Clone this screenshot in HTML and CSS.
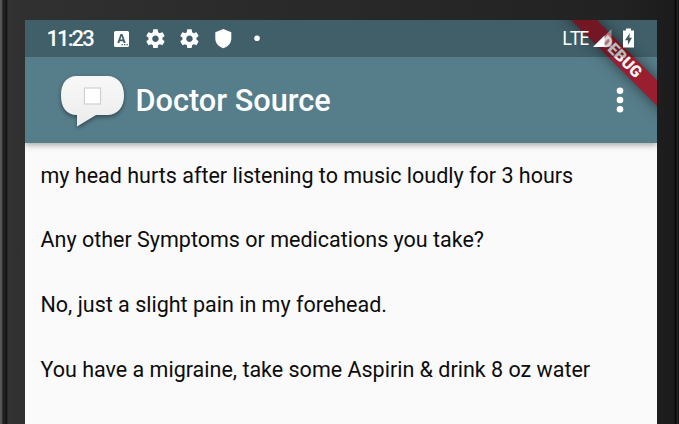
FILE: index.html
```html
<!DOCTYPE html>
<html lang="en">
<head>
<meta charset="utf-8">
<title>Doctor Source</title>
<link rel="stylesheet" href="styles.css">
</head>
<body>
<div class="phone">
  <main class="screen">
    <header class="appbar">
      <svg class="logo" viewBox="0 0 76 64">
        <defs><linearGradient id="bubble" x1="0" y1="0" x2="0" y2="1"><stop offset="0" stop-color="#f8f8f8"/><stop offset="1" stop-color="#ececec"/></linearGradient></defs>
        <path d="M22 6H52C63 6 69 14 69 25.500S63 45 52 45H41L22 56.500V45C11 45 6 37 6 25.500S11 6 22 6Z" fill="url(#bubble)"/>
        <rect x="29.500" y="18" width="16" height="16" fill="#fff" stroke="#d0d0d0" stroke-width="1.200"/>
      </svg>
      <h1 class="title">Doctor Source</h1>
      <svg class="more" viewBox="0 0 8 28"><circle cx="4" cy="4.700" r="3.300"/><circle cx="4" cy="14" r="3.300"/><circle cx="4" cy="23.200" r="3.300"/></svg>
    </header>
    <section class="messages">
      <p>my head hurts after listening to music loudly for 3 hours</p>
      <p>Any other Symptoms or medications you take?</p>
      <p>No, just a slight pain in my forehead.</p>
      <p>You have a migraine, take some Aspirin &amp; drink 8 oz water</p>
    </section>
    <div class="banner">DEBUG</div>
    <div class="status">
      <span class="clock">11:23</span>
      <svg class="notices" viewBox="0 0 160 37">
        <path fill-rule="evenodd" d="M5.500 11H17.500Q19 11 19 12.500V25.500Q19 27 17.500 27H5.500Q4 27 4 25.500V12.500Q4 11 5.500 11ZM10.500 14L7.300 23H9.400L9.900 21.200H13.100L13.600 23H15.700L12.500 14ZM11.500 16L12.600 19.600H10.400Z"/>
        <path class="cut" d="M11.500 24.700h1.300M14 24.700h1.300M16.500 24.700h1.300"/>
        <g id="gear"><path transform="translate(34.300 7.500) scale(.93)" d="M19.430 12.980c.04-.32.07-.64.07-.98s-.03-.66-.07-.98l2.110-1.650c.19-.15.24-.42.12-.64l-2-3.460c-.12-.22-.39-.3-.61-.22l-2.490 1c-.52-.4-1.080-.73-1.690-.98l-.38-2.650C14.460 2.180 14.250 2 14 2h-4c-.25 0-.46.18-.49.42l-.38 2.650c-.61.25-1.170.59-1.690.98l-2.490-1c-.23-.09-.49 0-.61.22l-2 3.460c-.13.22-.07.49.12.64l2.110 1.650c-.04.32-.07.65-.07.98s.03.66.07.98l-2.110 1.650c-.19.15-.24.42-.12.64l2 3.460c.12.22.39.3.61.22l2.490-1c.52.4 1.080.73 1.690.98l.38 2.650c.03.24.24.42.49.42h4c.25 0 .46-.18.49-.42l.38-2.650c.61-.25 1.170-.59 1.690-.98l2.490 1c.23.09.49 0 .61-.22l2-3.460c.12-.22.07-.49-.12-.64l-2.110-1.650zM12 15.500c-1.930 0-3.500-1.570-3.500-3.500s1.570-3.500 3.500-3.500 3.500 1.570 3.500 3.500-1.570 3.500-3.500 3.500z"/></g>
        <use href="#gear" x="34"/>
        <path d="M113.300 9L121.300 12.200V18.500C121.300 23 118 26.700 113.300 28.300C108.600 26.700 105.300 23 105.300 18.500V12.200Z"/>
        <circle cx="147" cy="18.200" r="2.800"/>
      </svg>
      <span class="network">LTE</span>
      <svg class="power" viewBox="0 0 50 37">
        <path opacity=".4" d="M18.500 9V27H0Z"/><path d="M11.500 15.500V27H0Z"/>
        <path fill-rule="evenodd" d="M33 8.500H38V10.500H41V27.500H30V10.500H33ZM36.800 13L32 20.200H34.900V25L39 17.800H36.400Z"/>
      </svg>
    </div>
  </main>
</div>
</body>
</html>
```
FILE: styles.css
```css
* { box-sizing: border-box; }
body { margin: 0; font-family: Roboto, sans-serif; }
.phone {
  height: 424px;
  padding: 20px 22px 0 25px;
  overflow: hidden;
  background:
    linear-gradient(90deg, #595959 0, #505050 2px, #171717 3px, #282828 5px, #080808 6px, #333 8px, transparent 9px) left / 9px 100% no-repeat,
    linear-gradient(90deg, transparent, #060606 2px, #252525 3px, #151515) right / 5px 100% no-repeat,
    linear-gradient(90deg, #343434, #303030 25px, #222 620px, #1b1b1b);
}
.screen { position: relative; height: 404px; overflow: hidden; background: #fafafa; }
.appbar {
  position: relative;
  display: flex;
  align-items: center;
  height: 123px;
  padding: 37px 33px 0 30px;
  background: #567d8a;
  box-shadow: 0 2px 6px rgba(0, 0, 0, .35);
}
.logo { width: 76px; height: 64px; margin-top: 4px; filter: drop-shadow(0 2px 2px rgba(0, 0, 0, .4)); }
.title { flex: 1; margin: 1px 0 0 4.500px; color: #fff; font-size: 30.700px; font-weight: 500; line-height: 36px; }
.more { width: 8px; height: 28px; fill: #fff; }
.messages { display: grid; grid-auto-rows: 64.7px; align-items: center; padding-top: .3px; color: #0c0c0c; }
.messages p { margin: 0; padding-left: 15.500px; font-size: 21.500px; line-height: 26px; white-space: nowrap; }
.banner {
  position: absolute;
  top: 28px;
  left: 525px;
  width: 142px;
  height: 18px;
  transform: rotate(45deg);
  background: rgba(170, 8, 25, .8);
  box-shadow: 0 0 14px rgba(0, 0, 0, .5);
  color: #f4f4f4;
  font-size: 16px;
  font-weight: 900;
  line-height: 18px;
  text-align: center;
}
.status {
  position: absolute;
  inset: 0 0 auto;
  display: flex;
  align-items: center;
  height: 37px;
  padding-left: 21.500px;
  background: rgba(0, 0, 0, .24);
  color: #fff;
}
.clock { width: 63.500px; font-size: 22px; font-weight: 500; letter-spacing: -1.900px; }
.notices { width: 160px; height: 37px; fill: #fff; }
.cut { stroke: #415f69; stroke-width: 1.300; }
.network { width: 31px; margin: -2px 0 0 292px; font-family: "Noto Sans", sans-serif; font-size: 19px; letter-spacing: -1.600px; }
.power { width: 50px; height: 37px; fill: #fff; }
```
